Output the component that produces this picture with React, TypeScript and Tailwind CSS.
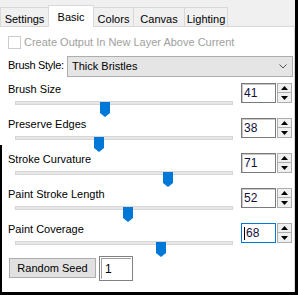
import React from "react";

type SliderRow = {
  label: string;
  value: number;
  focused?: boolean;
};

const rows: SliderRow[] = [
  { label: "Brush Size", value: 41 },
  { label: "Preserve Edges", value: 38 },
  { label: "Stroke Curvature", value: 71 },
  { label: "Paint Stroke Length", value: 52 },
  { label: "Paint Coverage", value: 68, focused: true },
];

const tabs = [
  { name: "Settings", w: "w-[49px]" },
  { name: "Basic", w: "w-[46px]", active: true },
  { name: "Colors", w: "w-[41px]" },
  { name: "Canvas", w: "w-[52px]" },
  { name: "Lighting", w: "w-[44px]" },
];

const Thumb = () => (
  <svg width="10" height="15" viewBox="0 0 10 15">
    <path d="M0 0H10V11L5 15L0 11Z" fill="#0078d7" />
  </svg>
);

const SpinButtons = () => (
  <div className="flex flex-col w-[15px] ml-[1px]">
    <div className="h-[10px] flex items-center justify-center bg-[#f0f0f0] border border-[#adadad]">
      <svg width="7" height="4" viewBox="0 0 7 4">
        <path d="M3.5 0L7 4H0Z" fill="#000" />
      </svg>
    </div>
    <div className="h-[10px] flex items-center justify-center bg-[#f0f0f0] border border-t-0 border-[#adadad]">
      <svg width="7" height="4" viewBox="0 0 7 4">
        <path d="M0 0H7L3.5 4Z" fill="#000" />
      </svg>
    </div>
  </div>
);

const Slider = ({ label, value, focused }: SliderRow) => {
  return (
    <div className="flex h-[35px]">
      <div className="w-[241px]">
        <div className="pl-[8px] h-[13px] leading-[13px] text-black">{label}</div>
        <div className="relative ml-[15px] w-[218px] h-[22px]">
          <div className="mt-[5px] h-[4px] bg-[#e7e7e7] border border-[#d6d6d6]" />
          <div className="absolute top-[1px]" style={{ left: Math.round(value * 2.08) }}>
            <Thumb />
          </div>
        </div>
      </div>
      <div className="flex h-[20px]">
        <div
          className={
            focused
              ? "w-[35px] h-[20px] border border-[#0078d7] bg-white flex items-center pl-[2px] text-[12px]"
              : "w-[35px] h-[20px] border border-[#7a7a7a] bg-white flex items-center pl-[2px] text-[12px] shadow-[inset_1px_1px_0_#c8c8c8]"
          }
        >
          {focused && <span className="w-px h-[13px] bg-black mr-[1px]" />}
          <span className="text-[#101040]">{value}</span>
        </div>
        <SpinButtons />
      </div>
    </div>
  );
};

export default function App() {
  return (
    <div className="relative w-[298px] h-[295px] bg-[#f0f0f0] border-r-[3px] border-b-[3px] border-black font-['Liberation_Sans',Arial,sans-serif] text-[11px] overflow-hidden">
      {/* tab strip */}
      <div className="flex items-end h-[26px]">
        {tabs.map((t, i) => (
          <div
            key={t.name}
            className={
              (i > 0 ? "-ml-px " : "") +
              t.w +
              (t.active
                ? " relative z-10 h-[22px] -mb-px bg-white border border-b-0 border-[#d9d9d9] flex justify-center pt-[3px] text-black"
                : " h-[19px] bg-[#f0f0f0] border border-b-0 border-[#d9d9d9] flex justify-center pt-[3px] text-black")
            }
          >
            {t.name}
          </div>
        ))}
      </div>

      {/* panel */}
      <div className="h-[266px] bg-white border-t border-r border-[#d9d9d9]">
        <div className="flex items-center mt-[9px] h-[13px]">
          <div className="ml-[8px] w-[13px] h-[13px] border border-[#cccccc] bg-white" />
          <span className="ml-[3px] leading-[13px] text-[#a0a0a0] whitespace-nowrap">
            Create Output In New Layer Above Current
          </span>
        </div>

        <div className="flex items-center mt-[7px] h-[21px]">
          <span className="ml-[8px] w-[59px] shrink-0 whitespace-nowrap tracking-[-0.3px] leading-[13px] -mt-[2px] text-black">
            Brush Style:
          </span>
          <div className="w-[226px] shrink-0 h-[21px] bg-[#e5e5e5] border border-[#adadad] flex items-center justify-between pl-[4px] pr-[5px]">
            <span className="leading-[13px] text-black">Thick Bristles</span>
            <svg width="8" height="5" viewBox="0 0 8 5">
              <path d="M0.5 0.5L4 4L7.5 0.5" fill="none" stroke="#555" strokeWidth="1" />
            </svg>
          </div>
        </div>

        <div className="mt-[6px]">
          {rows.map((r) => (
            <Slider key={r.label} {...r} />
          ))}
        </div>

        <div className="flex items-start -mt-[2px]">
          <button className="ml-[9px] mt-[2px] w-[87px] h-[20px] bg-[#e1e1e1] border border-[#adadad] text-black text-[11px] leading-[13px]">
            Random Seed
          </button>
          <div className="ml-[3px] w-[34px] h-[25px] border border-[#828282] p-px bg-white">
            <div className="w-full h-full border-t border-l border-[#a0a0a0] flex items-center pl-[3px] text-[12px] text-black">
              1
            </div>
          </div>
        </div>
      </div>

      <div className="absolute left-0 top-[145px] bottom-0 w-[2px] bg-black pointer-events-none" />
    </div>
  );
}
